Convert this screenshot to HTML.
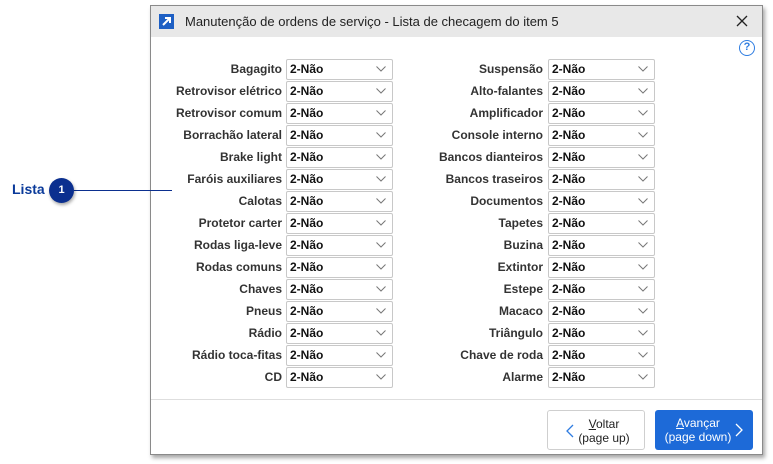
<!DOCTYPE html>
<html><head><meta charset="utf-8"><style>
*{box-sizing:border-box;margin:0;padding:0}
body{width:773px;height:464px;background:#fff;position:relative;overflow:hidden;font-family:"Liberation Sans",Tahoma,sans-serif}
.win{position:absolute;left:150px;top:5px;width:613px;height:450px;background:#fff;border:1px solid #8a8a8a;box-shadow:2px 3px 4px rgba(0,0,0,.35)}
.title{position:absolute;left:0;top:0;width:611px;height:31px;background:#e8e8e8}
.title .ic{position:absolute;left:8px;top:8px;width:15px;height:15px;background:#1d5fc4}
.title .t{position:absolute;left:34px;top:8px;font-size:13px;color:#222}
.title .x{position:absolute;left:584px;top:8px}
.help{position:absolute;left:588px;top:34px;width:16px;height:16px;border:1.5px solid #2f7de1;border-radius:50%;color:#2f7de1;font-size:11px;text-align:center;line-height:13px;font-weight:bold}
.lbl{position:absolute;font-size:12px;font-weight:bold;color:#333;text-align:right;width:200px;height:22px;line-height:22px}
.sel{position:absolute;width:107px;height:21px;border:1px solid #c8c8c8;border-radius:2px;background:#fff;font-size:12px;font-weight:bold;color:#111;line-height:19px;padding-left:3px}
.sel svg{position:absolute;right:6px;top:6px}
.sep{position:absolute;left:0;top:393px;width:611px;height:1px;background:#dedede}
.btn{position:absolute;top:404px;width:98px;height:40px;border-radius:3px;font-size:12px;text-align:center;line-height:14px;padding-top:6px}
.b1{left:396px;border:1px solid #cfcfcf;background:#fff;color:#222;padding-left:16px}
.b2{left:504px;background:#1d6ad8;color:#fff;padding-right:12px}
.b1 svg,.b2 svg{position:absolute;top:13px}
.callout{position:absolute;left:12px;top:181px;font-size:14px;font-weight:bold;color:#0a3a9a}
.num{position:absolute;left:49px;top:178px;width:25px;height:25px;border-radius:50%;background:#0b2f8f;color:#fff;font-size:11px;font-weight:bold;text-align:center;line-height:25px;box-shadow:1px 2px 3px rgba(0,0,0,.35);z-index:3}
.line{position:absolute;left:74px;top:190px;width:98px;height:1px;background:#0b2f8f;z-index:2}
</style></head><body>
<div class="callout">Lista</div>
<div class="win">
<div class="title"><div class="ic"><svg width="15" height="15"><path d="M4 11 L11 4 M6 4 H11 V9" stroke="#fff" stroke-width="2" fill="none"/></svg></div>
<div class="t">Manutenção de ordens de serviço - Lista de checagem do item 5</div>
<svg class="x" width="14" height="14"><path d="M2 2 L12 12 M12 2 L2 12" stroke="#222" stroke-width="1.3"/></svg></div>
<div class="help">?</div>
<div id="rows"></div>
<div class="sep"></div>
<div class="btn b1"><svg style="left:18px" width="8" height="14"><path d="M7 1 L1 7 L7 13" stroke="#2f7de1" stroke-width="1.3" fill="none"/></svg><u>V</u>oltar<br>(page up)</div>
<div class="btn b2"><u>A</u>vançar<br>(page down)<svg style="left:80px" width="8" height="14"><path d="M1 1 L7 7 L1 13" stroke="#fff" stroke-width="1.3" fill="none"/></svg></div>
</div>
<div class="line"></div><div class="num">1</div>
<script>
var L=["Bagagito","Retrovisor elétrico","Retrovisor comum","Borrachão lateral","Brake light","Faróis auxiliares","Calotas","Protetor carter","Rodas liga-leve","Rodas comuns","Chaves","Pneus","Rádio","Rádio toca-fitas","CD"];
var R=["Suspensão","Alto-falantes","Amplificador","Console interno","Bancos dianteiros","Bancos traseiros","Documentos","Tapetes","Buzina","Extintor","Estepe","Macaco","Triângulo","Chave de roda","Alarme"];
var h="",arr='<svg width="10" height="6"><path d="M0.5 0.5 L5 5 L9.5 0.5" stroke="#777" fill="none"/></svg>';
for(var i=0;i<15;i++){var y=53+i*22;
h+='<div class="lbl" style="left:-69px;top:'+(y-1)+'px">'+L[i]+'</div><div class="sel" style="left:135px;top:'+y+'px">2-Não'+arr+'</div>';
h+='<div class="lbl" style="left:192px;top:'+(y-1)+'px">'+R[i]+'</div><div class="sel" style="left:397px;top:'+y+'px">2-Não'+arr+'</div>';}
document.getElementById("rows").innerHTML=h;
</script>
</body></html>
